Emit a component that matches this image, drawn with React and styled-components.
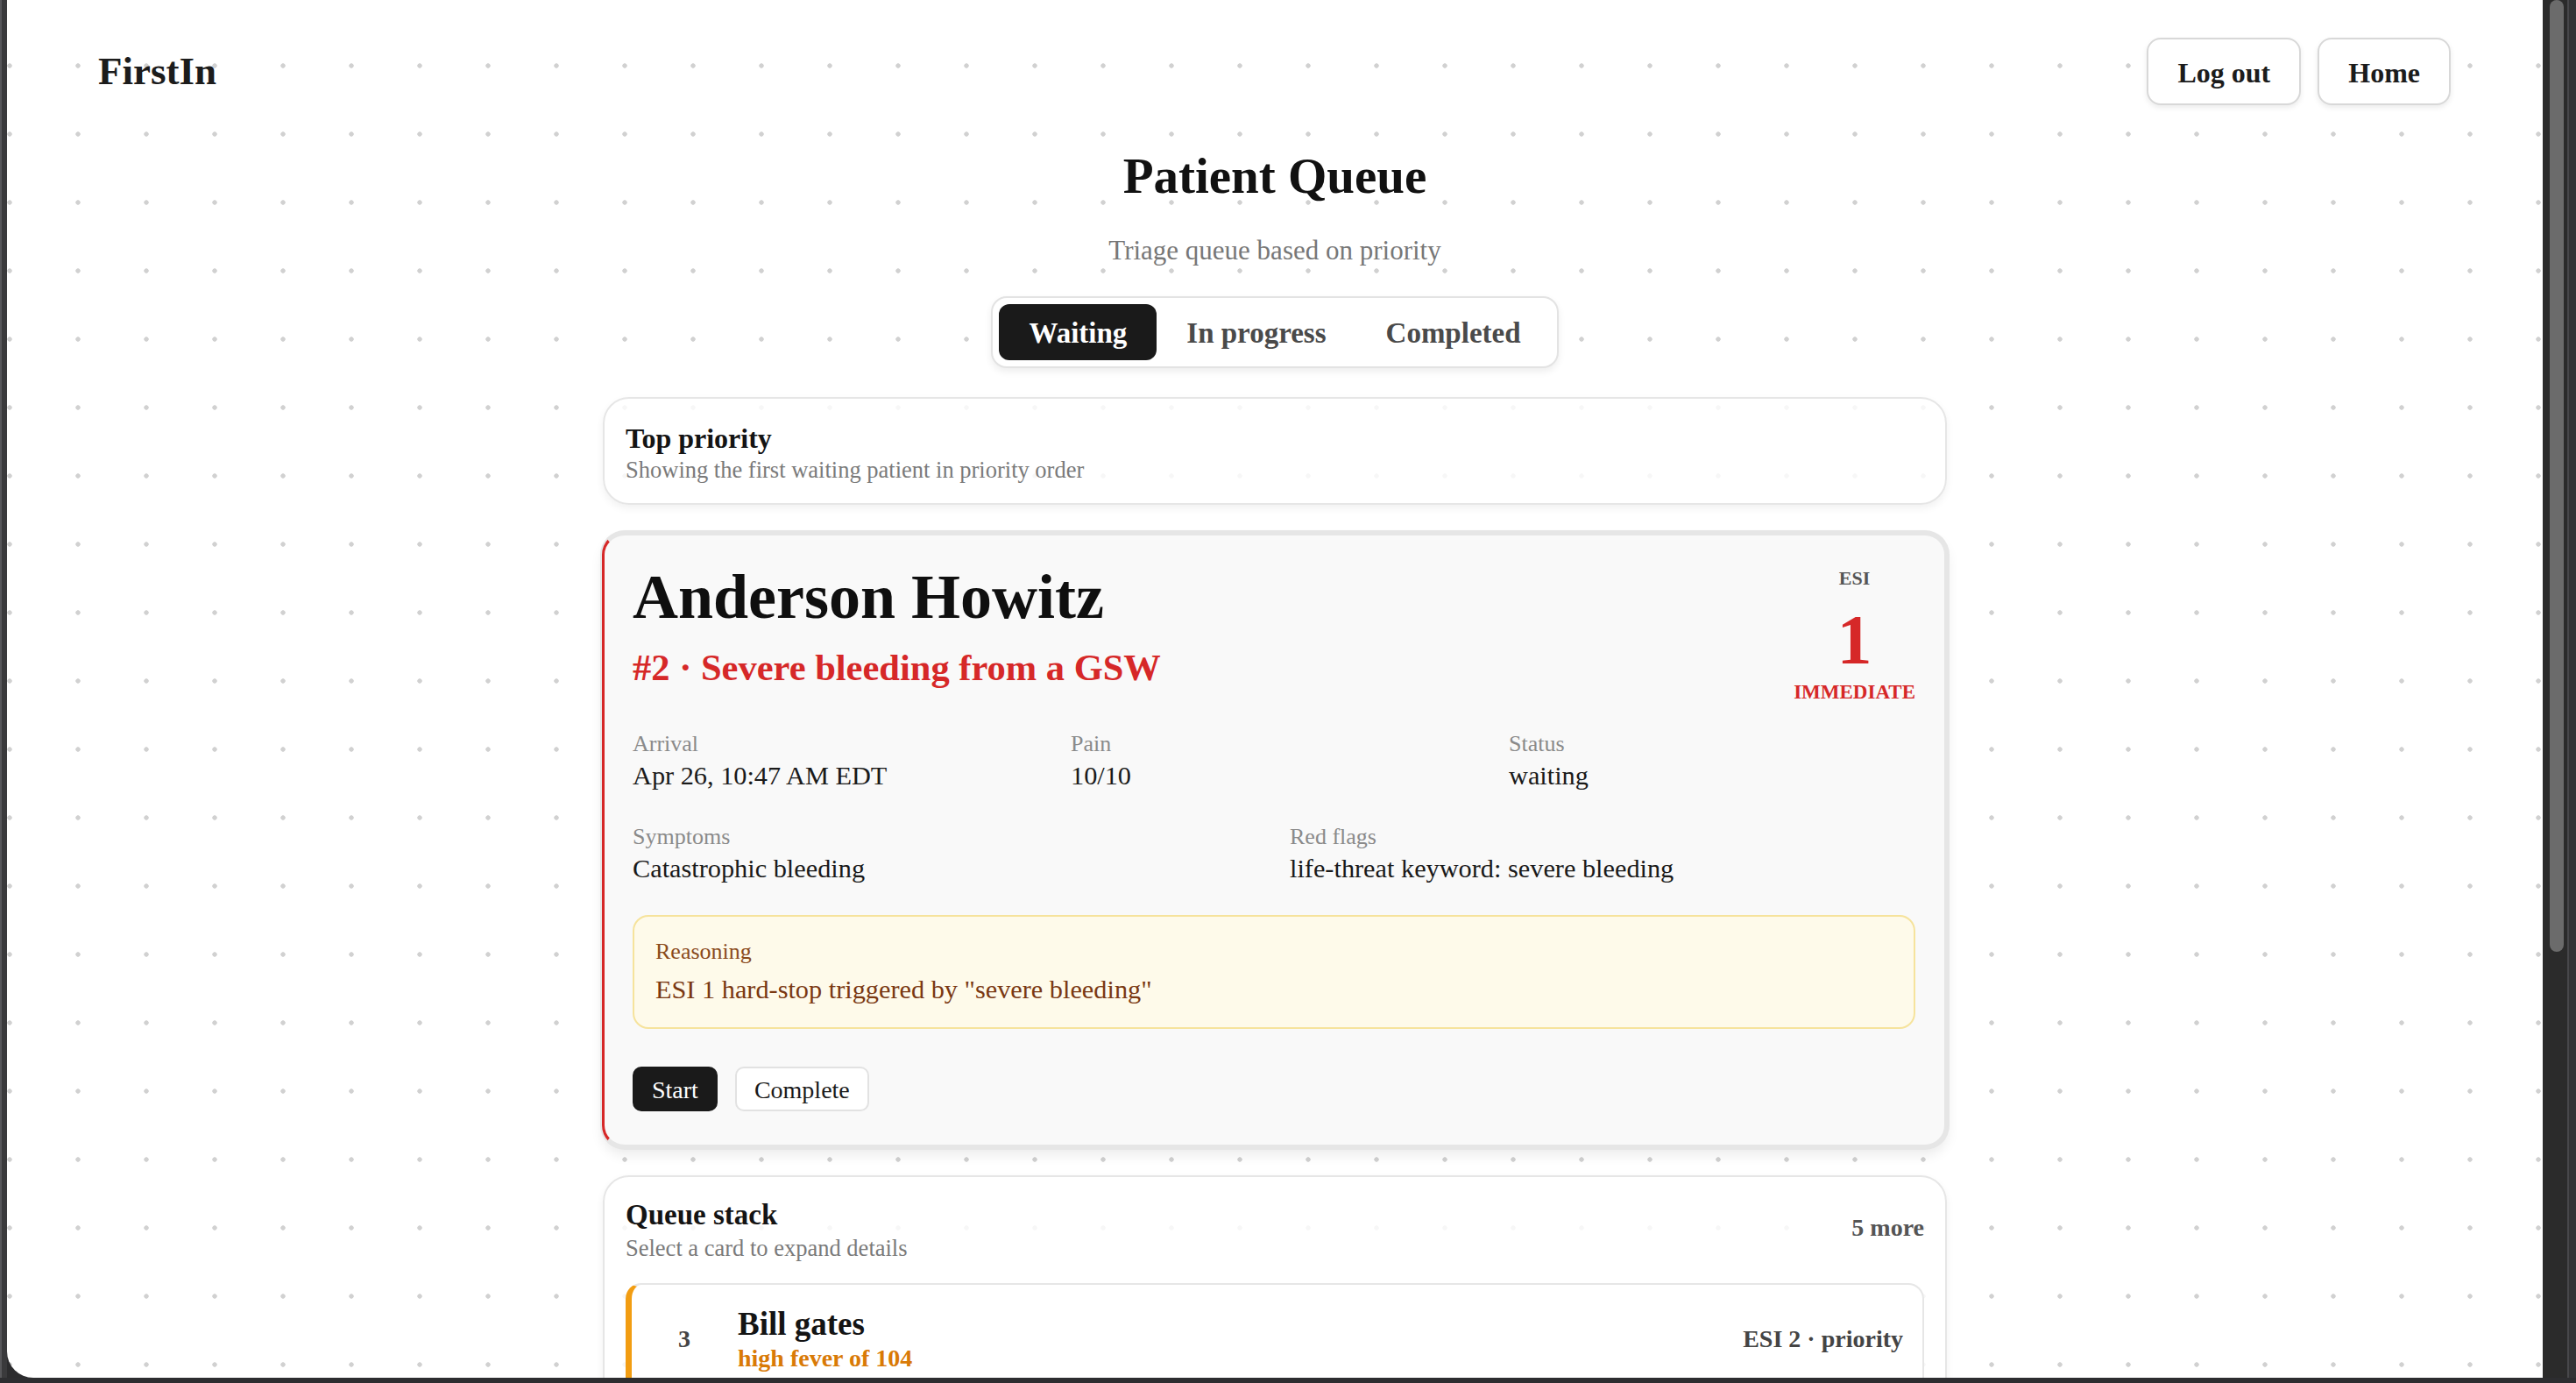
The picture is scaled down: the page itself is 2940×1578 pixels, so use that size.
import React, { useState } from 'react'
import styled, { createGlobalStyle } from 'styled-components'

const GlobalStyle = createGlobalStyle`
    html, body {
        margin: 0;
        padding: 0;
        overflow: hidden;
    }
    body {
        font-family: 'Liberation Serif', 'Times New Roman', serif;
        color: #1a1a1a;
    }
    * { box-sizing: border-box; }
`

const patient = {
    name: 'Anderson Howitz',
    number: 2,
    complaint: 'Severe bleeding from a GSW',
    esi: 1,
    level: 'IMMEDIATE',
    arrival: 'Apr 26, 10:47 AM EDT',
    pain: '10/10',
    status: 'waiting',
    symptoms: 'Catastrophic bleeding',
    flags: 'life-threat keyword: severe bleeding',
    reasoning: 'ESI 1 hard-stop triggered by "severe bleeding"',
}

const queue = [
    { pos: 3, name: 'Bill gates', complaint: 'high fever of 104', esi: 2, label: 'priority', accent: '#f29d12', tone: '#d97a06' },
]

// window frame ======================
const Window = styled.div`
    height: 100vh;
    display: flex;
    flex-direction: column;
    background: #2c2c2e;
`
const Body = styled.div`
    flex: 1;
    min-height: 0;
    display: flex;
`
const LeftEdge = styled.div`
    width: 8px;
    background: #3a3a3c;
    border-left: 2px solid #57575a;
`
const BottomEdge = styled.div`
    height: 6px;
    background: #2d2d30;
`
const ScrollRail = styled.div`
    width: 38px;
    padding-left: 8px;
    background: linear-gradient(to right, #2b2b2b 0, #2b2b2b 28px, #47474a 28px, #47474a 30px, #333335 30px);
`
const ScrollThumb = styled.div`
    width: 16px;
    height: 1086px;
    border-radius: 8px;
    background: #6b6b6b;
`

// page ======================
const Page = styled.div`
    flex: 1;
    min-width: 0;
    overflow: hidden;
    border-bottom-left-radius: 30px;
    background-color: #fff;
    background-image: radial-gradient(circle at center, #d1d1d1 0, #d1d1d1 2.4px, transparent 3px);
    background-size: 78px 78px;
    background-position: -36px 36px;
`
const Header = styled.header`
    height: 120px;
    padding: 43px 105px 0 104px;
    display: flex;
    justify-content: space-between;
    align-items: center;
`
const Logo = styled.div`
    font-size: 45px;
    font-weight: 700;
    line-height: 1;
    color: #1c1c1c;
`
const NavButtons = styled.nav`
    display: flex;
    gap: 19px;
`
const NavButton = styled.button`
    height: 77px;
    padding: 2px 33px 0;
    font-family: inherit;
    font-size: 32px;
    font-weight: 700;
    line-height: 1;
    color: #1c1c1c;
    background: #fff;
    border: 2px solid #d8d8d8;
    border-radius: 16px;
    box-shadow: 0 3px 6px rgba(0, 0, 0, 0.08);
    cursor: pointer;
`

const Main = styled.main`
    width: 1534px;
    margin: 0 auto;
    padding-top: 47px;
    display: flex;
    flex-direction: column;
`
const Title = styled.h1`
    margin: 0;
    font-size: 57px;
    font-weight: 700;
    line-height: 1.2;
    text-align: center;
    color: #111;
`
const Subtitle = styled.p`
    margin: 31px 0 0;
    font-size: 31px;
    line-height: 1.3;
    text-align: center;
    color: #777;
`
const Tabs = styled.div`
    align-self: center;
    margin-top: 31px;
    display: flex;
    padding: 7px;
    background: #fff;
    border: 2px solid #e3e3e3;
    border-radius: 18px;
    box-shadow: 0 4px 8px rgba(0, 0, 0, 0.07);
`
const Tab = styled.button`
    height: 64px;
    padding: 4px 34px 0;
    font-family: inherit;
    font-size: 33px;
    font-weight: 700;
    line-height: 1;
    border: none;
    border-radius: 12px;
    cursor: pointer;
    color: ${p => p.active ? '#fff' : '#4a4a4a'};
    background: ${p => p.active ? '#1a1a1a' : 'transparent'};
`

// top priority ======================
const Panel = styled.section`
    margin-top: 33px;
    padding: 26px 24px 20px;
    background: rgba(255, 255, 255, 0.82);
    border: 2px solid #e6e6e6;
    border-radius: 30px;
    box-shadow: 0 4px 10px rgba(0, 0, 0, 0.06);
`
const PanelTitle = styled.h2`
    margin: 0;
    font-size: 32px;
    font-weight: 700;
    line-height: 1.2;
    color: #141414;
`
const PanelNote = styled.p`
    margin: 0;
    font-size: 26.5px;
    line-height: 1.3;
    color: #7a7a7a;
`

// patient card ======================
const PatientCard = styled.article`
    margin: 31px -1px 0;
    padding: 31px 33px 38px 32px;
    background: #f9f9f9;
    border: 4px solid #e6e6e6;
    border-left: 3px solid #d62828;
    border-radius: 26px;
    box-shadow: 0 0 0 2px #e6e6e6, 0 8px 14px rgba(0, 0, 0, 0.08);
`
const CardHead = styled.div`
    display: flex;
    justify-content: space-between;
    align-items: flex-start;
`
const Name = styled.h3`
    margin: 0;
    font-size: 72px;
    font-weight: 700;
    line-height: 1.1;
    color: #0f0f0f;
`
const Complaint = styled.div`
    margin-top: 15px;
    font-size: 42.5px;
    font-weight: 700;
    line-height: 1.2;
    color: #d62828;
`
const EsiBlock = styled.div`
    margin-top: 5px;
    display: flex;
    flex-direction: column;
    align-items: center;
`
const EsiLabel = styled.div`
    font-size: 22px;
    font-weight: 700;
    line-height: 1.2;
    color: #555;
`
const EsiValue = styled.div`
    margin-top: 17px;
    font-size: 80px;
    font-weight: 700;
    line-height: 1;
    color: #d62828;
`
const EsiLevel = styled.div`
    margin-top: 6px;
    font-size: 23px;
    font-weight: 700;
    line-height: 1.2;
    color: #d62828;
`
const FieldGrid = styled.div`
    display: grid;
    grid-template-columns: repeat(${p => p.cols}, 1fr);
    column-gap: 36px;
    margin-top: ${p => p.top}px;
`
const Field = styled.div``
const FieldLabel = styled.div`
    font-size: 26px;
    line-height: 1.3;
    color: #8a8a8a;
`
const FieldValue = styled.div`
    margin-top: 1px;
    font-size: 30.3px;
    line-height: 1.3;
    color: #1a1a1a;
`
const Reasoning = styled.div`
    margin-top: 32px;
    padding: 23px 24px 23px;
    background: #fefaea;
    border: 2px solid #f6e39c;
    border-radius: 18px;
`
const ReasoningLabel = styled.div`
    font-size: 26px;
    line-height: 1.3;
    color: #8a4a1c;
`
const ReasoningText = styled.div`
    margin-top: 7px;
    font-size: 30.3px;
    line-height: 1.3;
    color: #7a3812;
`
const Actions = styled.div`
    margin-top: 43px;
    display: flex;
    gap: 20px;
`
const ActionButton = styled.button`
    height: 51px;
    padding: 2px 20px 0;
    font-family: inherit;
    font-size: 28px;
    line-height: 1;
    border-radius: 10px;
    cursor: pointer;
    color: ${p => p.primary ? '#fff' : '#1a1a1a'};
    background: ${p => p.primary ? '#1a1a1a' : '#fff'};
    border: 2px solid ${p => p.primary ? '#1a1a1a' : '#e2e2e2'};
`

// queue stack ======================
const QueuePanel = styled.section`
    margin-top: 31px;
    padding: 24px 24px 22px;
    background: rgba(255, 255, 255, 0.82);
    border: 2px solid #e6e6e6;
    border-radius: 30px;
    box-shadow: 0 4px 10px rgba(0, 0, 0, 0.06);
`
const QueueHead = styled.div`
    display: flex;
    justify-content: space-between;
    align-items: center;
`
const QueueTitle = styled.h2`
    margin: 0;
    font-size: 33px;
    font-weight: 700;
    line-height: 1.2;
    color: #141414;
`
const MoreCount = styled.div`
    padding-bottom: 6px;
    font-size: 28px;
    font-weight: 700;
    color: #555;
`
const QueueItem = styled.div`
    margin-top: 23px;
    padding: 23px 22px 24px 32px;
    display: flex;
    align-items: center;
    gap: 33px;
    background: #fff;
    border: 2px solid #e6e6e6;
    border-left: 7px solid ${p => p.accent};
    border-radius: 18px;
    cursor: pointer;
`
const QueueIndex = styled.div`
    width: 56px;
    text-align: center;
    font-size: 28px;
    font-weight: 700;
    line-height: 1.2;
    color: #444;
`
const QueueInfo = styled.div`
    flex: 1;
`
const QueueName = styled.div`
    font-size: 37px;
    font-weight: 700;
    line-height: 1.2;
    color: #141414;
`
const QueueComplaint = styled.div`
    font-size: 28px;
    font-weight: 700;
    line-height: 1.2;
    color: ${p => p.tone};
`
const QueueMeta = styled.div`
    font-size: 28px;
    font-weight: 700;
    line-height: 1.2;
    color: #444;
`

const tabs = ['Waiting', 'In progress', 'Completed']

const App = () => {
    const [tab, setTab] = useState('Waiting')

    return (
        <Window>
            <GlobalStyle />
            <Body>
                <LeftEdge />
                <Page>
                    <Header>
                        <Logo>FirstIn</Logo>
                        <NavButtons>
                            <NavButton>Log out</NavButton>
                            <NavButton>Home</NavButton>
                        </NavButtons>
                    </Header>

                    <Main>
                        <Title>Patient Queue</Title>
                        <Subtitle>Triage queue based on priority</Subtitle>
                        <Tabs>
                            {tabs.map(t =>
                                <Tab key={t} active={tab === t} onClick={() => setTab(t)}>{t}</Tab>
                            )}
                        </Tabs>

                        <Panel>
                            <PanelTitle>Top priority</PanelTitle>
                            <PanelNote>Showing the first waiting patient in priority order</PanelNote>
                        </Panel>

                        <PatientCard>
                            <CardHead>
                                <div>
                                    <Name>{patient.name}</Name>
                                    <Complaint>#{patient.number} · {patient.complaint}</Complaint>
                                </div>
                                <EsiBlock>
                                    <EsiLabel>ESI</EsiLabel>
                                    <EsiValue>{patient.esi}</EsiValue>
                                    <EsiLevel>{patient.level}</EsiLevel>
                                </EsiBlock>
                            </CardHead>

                            <FieldGrid cols={3} top={28}>
                                <Field>
                                    <FieldLabel>Arrival</FieldLabel>
                                    <FieldValue>{patient.arrival}</FieldValue>
                                </Field>
                                <Field>
                                    <FieldLabel>Pain</FieldLabel>
                                    <FieldValue>{patient.pain}</FieldValue>
                                </Field>
                                <Field>
                                    <FieldLabel>Status</FieldLabel>
                                    <FieldValue>{patient.status}</FieldValue>
                                </Field>
                            </FieldGrid>
                            <FieldGrid cols={2} top={32}>
                                <Field>
                                    <FieldLabel>Symptoms</FieldLabel>
                                    <FieldValue>{patient.symptoms}</FieldValue>
                                </Field>
                                <Field>
                                    <FieldLabel>Red flags</FieldLabel>
                                    <FieldValue>{patient.flags}</FieldValue>
                                </Field>
                            </FieldGrid>

                            <Reasoning>
                                <ReasoningLabel>Reasoning</ReasoningLabel>
                                <ReasoningText>{patient.reasoning}</ReasoningText>
                            </Reasoning>

                            <Actions>
                                <ActionButton primary>Start</ActionButton>
                                <ActionButton>Complete</ActionButton>
                            </Actions>
                        </PatientCard>

                        <QueuePanel>
                            <QueueHead>
                                <div>
                                    <QueueTitle>Queue stack</QueueTitle>
                                    <PanelNote>Select a card to expand details</PanelNote>
                                </div>
                                <MoreCount>5 more</MoreCount>
                            </QueueHead>
                            {queue.map(item =>
                                <QueueItem key={item.pos} accent={item.accent}>
                                    <QueueIndex>{item.pos}</QueueIndex>
                                    <QueueInfo>
                                        <QueueName>{item.name}</QueueName>
                                        <QueueComplaint tone={item.tone}>{item.complaint}</QueueComplaint>
                                    </QueueInfo>
                                    <QueueMeta>ESI {item.esi} · {item.label}</QueueMeta>
                                </QueueItem>
                            )}
                        </QueuePanel>
                    </Main>
                </Page>
                <ScrollRail>
                    <ScrollThumb />
                </ScrollRail>
            </Body>
            <BottomEdge />
        </Window>
    )
}

export default App
